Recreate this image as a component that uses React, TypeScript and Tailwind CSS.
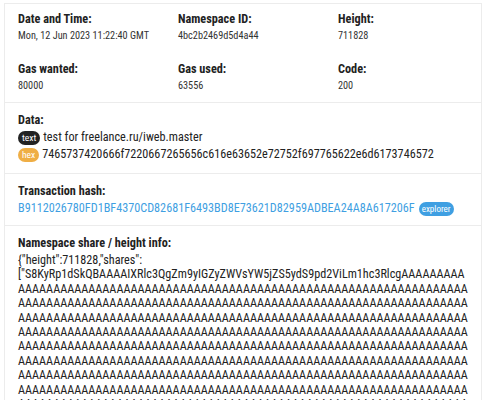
import React from "react";

const shares =
  '{"height":711828,"shares":["S8KyRp1dSkQBAAAAIXRlc3QgZm9yIGZyZWVsYW5jZS5ydS9pd2ViLm1hc3RlcgAAAAAAAAA' +
  "A".repeat(700);

function Field({ label, value }: { label: string; value: string }) {
  return (
    <div>
      <div className="text-[12.25px] font-bold leading-[15px] text-[#222]">{label}</div>
      <div className="mt-[2px] text-[10.25px] leading-[14px] text-[#333]">{value}</div>
    </div>
  );
}

export default function App() {
  return (
    <div
      className="w-[488px] h-[400px] overflow-hidden bg-white pl-[4px] pr-[6px] pt-[3px]"
      style={{ fontFamily: '"Roboto Condensed", Roboto, sans-serif' }}
    >
      <div className="border border-[#ececec] text-[#222]">
        <div className="grid grid-cols-[160px_160px_1fr] gap-y-[19px] px-[13px] pt-[8px] pb-[9px]">
          <Field label="Date and Time:" value="Mon, 12 Jun 2023 11:22:40 GMT" />
          <Field label="Namespace ID:" value="4bc2b2469d5d4a44" />
          <Field label="Height:" value="711828" />
          <Field label="Gas wanted:" value="80000" />
          <Field label="Gas used:" value="63556" />
          <Field label="Code:" value="200" />
        </div>
        <div className="border-t border-[#ececec] px-[13px] pt-[10px] pb-[10px]">
          <div className="text-[12.25px] font-bold leading-[15px]">Data:</div>
          <div className="mt-[1px] flex items-center gap-[3px] text-[12.2px] leading-[17px]">
            <span className="rounded-full bg-[#222] px-[4px] text-[9.5px] leading-[14px] text-white">text</span>
            <span>test for freelance.ru/iweb.master</span>
          </div>
          <div className="flex items-center gap-[3px] text-[12.2px] leading-[17px]">
            <span className="rounded-full bg-[#efae45] px-[4px] text-[9.5px] leading-[14px] text-white">hex</span>
            <span>7465737420666f7220667265656c616e63652e72752f697765622e6d6173746572</span>
          </div>
        </div>
        <div className="border-t border-[#ececec] px-[13px] pt-[10px] pb-[8px]">
          <div className="text-[12.25px] font-bold leading-[15px]">Transaction hash:</div>
          <div className="mt-[1px] flex items-center gap-[4px] text-[12.2px] leading-[17px]">
            <span className="text-[#3f9fe2]">B9112026780FD1BF4370CD82681F6493BD8E73621D82959ADBEA24A8A617206F</span>
            <span className="rounded-full bg-[#3f9fe2] px-[3px] text-[9px] leading-[14px] text-white">explorer</span>
          </div>
        </div>
        <div className="border-t border-[#ececec] px-[13px] pt-[10px]">
          <div className="text-[12.25px] font-bold leading-[15px]">Namespace share / height info:</div>
          <div className="mt-[2px] break-words text-[12.2px] leading-[14.4px]">{shares}</div>
        </div>
      </div>
    </div>
  );
}
